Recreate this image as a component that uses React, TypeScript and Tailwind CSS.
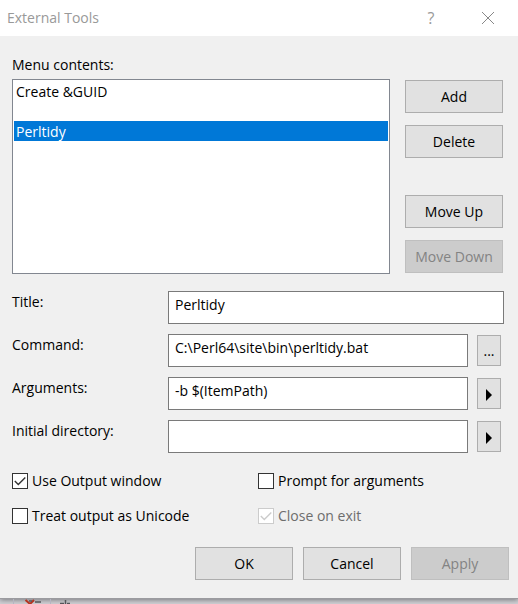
import { useState } from "react";
import type { ReactNode } from "react";

function PushButton({ children, disabled }: { children: ReactNode; disabled?: boolean }) {
  return (
    <button
      type="button"
      disabled={disabled}
      className="h-[33px] w-[98px] shrink-0 whitespace-nowrap border border-[#adadad] bg-[#e1e1e1] text-center disabled:border-[#bfbfbf] disabled:bg-[#cccccc] disabled:text-[#838383]"
    >
      {children}
    </button>
  );
}

function SmallButton({ label, children }: { label: string; children: ReactNode }) {
  return (
    <button
      type="button"
      aria-label={label}
      className="ml-[9px] mr-[3px] mt-px flex h-[31px] w-6 shrink-0 items-center justify-center border border-[#adadad] bg-[#e1e1e1]"
    >
      {children}
    </button>
  );
}

function Arrow() {
  return (
    <svg width="6" height="12" viewBox="0 0 6 12" className="mt-0.5" aria-hidden="true">
      <path d="M0 0 6 6 0 12Z" fill="#000" />
    </svg>
  );
}

function Field({ id, label, value, children }: { id: string; label: string; value: string; children?: ReactNode }) {
  return (
    <div className="flex items-start">
      <label htmlFor={id} className="w-[156px] shrink-0 leading-[22px]">
        {label}
      </label>
      <input
        id={id}
        type="text"
        defaultValue={value}
        className="h-[33px] min-w-0 flex-1 border border-[#7a7a7a] bg-white px-1.5 pb-1.5 outline-none"
      />
      {children}
    </div>
  );
}

function Check({ label, checked, disabled }: { label: string; checked?: boolean; disabled?: boolean }) {
  const [on, setOn] = useState(!!checked);
  return (
    <label className={"flex h-5 items-center gap-1 whitespace-nowrap " + (disabled ? "text-[#6d6d6d]" : "")}>
      <span className="grid size-4 shrink-0">
        <input
          type="checkbox"
          checked={on}
          disabled={disabled}
          onChange={() => setOn(!on)}
          className="col-start-1 row-start-1 size-4 appearance-none border border-[#333333] bg-white disabled:border-[#cccccc]"
        />
        {on && (
          <svg
            viewBox="0 0 16 16"
            className={"pointer-events-none col-start-1 row-start-1 size-4 " + (disabled ? "text-[#cccccc]" : "text-[#333333]")}
            aria-hidden="true"
          >
            <path d="M2.8 8 6.3 11.5 13.3 4.5" fill="none" stroke="currentColor" strokeWidth="1.4" />
          </svg>
        )}
      </span>
      {label}
    </label>
  );
}

export default function App() {
  return (
    <div className="min-h-screen bg-[#d0d0d4] font-['Open_Sans','Noto_Sans',sans-serif] text-sm text-black">
      <main className="border-b border-[#9b9b9f] bg-[#f0f0f0] shadow-[0_1px_5px_#77777c]">
        <header className="flex h-9 items-center bg-white pl-[7px] pr-[23px] text-[#999999]">
          <h1 className="flex-1">External Tools</h1>
          <button type="button" aria-label="Help" className="mr-11 w-3 text-base">
            ?
          </button>
          <button type="button" aria-label="Close">
            <svg width="14" height="14" viewBox="0 0 14 14" aria-hidden="true">
              <path d="M1 1 13 13M13 1 1 13" stroke="#888888" fill="none" />
            </svg>
          </button>
        </header>

        <section className="flex pl-3 pr-[15px] pt-[19px]">
          <div className="min-w-0 flex-1">
            <label htmlFor="menu" className="block h-6 leading-5">
              Menu contents:
            </label>
            <select
              id="menu"
              size={9}
              defaultValue="perltidy"
              className="block h-[195px] w-full appearance-none overflow-hidden border border-[#828790] bg-white p-px outline-none"
            >
              <option value="guid" className="h-5 min-h-5 px-0.5 pb-0 pt-px">
                Create &amp;GUID
              </option>
              <option value="blank" aria-label="Blank" className="h-5 min-h-5 px-0.5 pb-0 pt-px"></option>
              <option
                value="perltidy"
                className="h-5 min-h-5 px-0.5 pb-0 pt-px checked:bg-[linear-gradient(#0078d7,#0078d7)] checked:[-webkit-text-fill-color:white]"
              >
                Perltidy
              </option>
            </select>
          </div>
          <div className="ml-[15px] mt-[25px] flex flex-col gap-3">
            <PushButton>Add</PushButton>
            <PushButton>Delete</PushButton>
            <div className="mt-[25px] flex flex-col gap-3">
              <PushButton>Move Up</PushButton>
              <PushButton disabled>Move Down</PushButton>
            </div>
          </div>
        </section>

        <section className="mt-[17px] flex flex-col gap-[10px] pl-3 pr-[14px]">
          <Field id="title" label="Title:" value="Perltidy" />
          <Field id="command" label="Command:" value={"C:\\Perl64\\site\\bin\\perltidy.bat"}>
            <SmallButton label="Browse">...</SmallButton>
          </Field>
          <Field id="arguments" label="Arguments:" value="-b $(ItemPath)">
            <SmallButton label="Insert argument">
              <Arrow />
            </SmallButton>
          </Field>
          <Field id="directory" label="Initial directory:" value="">
            <SmallButton label="Insert directory">
              <Arrow />
            </SmallButton>
          </Field>
        </section>

        <section className="mt-[18px] grid grid-cols-2 gap-y-[15px] pl-3 pr-[14px]">
          <Check label="Use Output window" checked />
          <Check label="Prompt for arguments" />
          <Check label="Treat output as Unicode" />
          <Check label="Close on exit" checked disabled />
        </section>

        <footer className="flex justify-end gap-[10px] pb-[18px] pl-3 pr-[9px] pt-[21px]">
          <PushButton>OK</PushButton>
          <PushButton>Cancel</PushButton>
          <PushButton disabled>Apply</PushButton>
        </footer>
      </main>
      <div className="flex h-[5px] overflow-hidden pl-[13px]" aria-hidden="true">
        <svg width="60" height="5" viewBox="0 0 60 5">
          <path d="M.5 0V5M37.5 0V5" stroke="#b5b5c2" />
          <path d="M12.500 1 17 5M21 1 17 5" stroke="#b53320" strokeWidth="2" />
          <path d="M16 2H19M22 3H28M47 4.500H51M52.500 1V5M54 4.500H57" stroke="#55555a" strokeWidth="1.500" />
        </svg>
      </div>
    </div>
  );
}
